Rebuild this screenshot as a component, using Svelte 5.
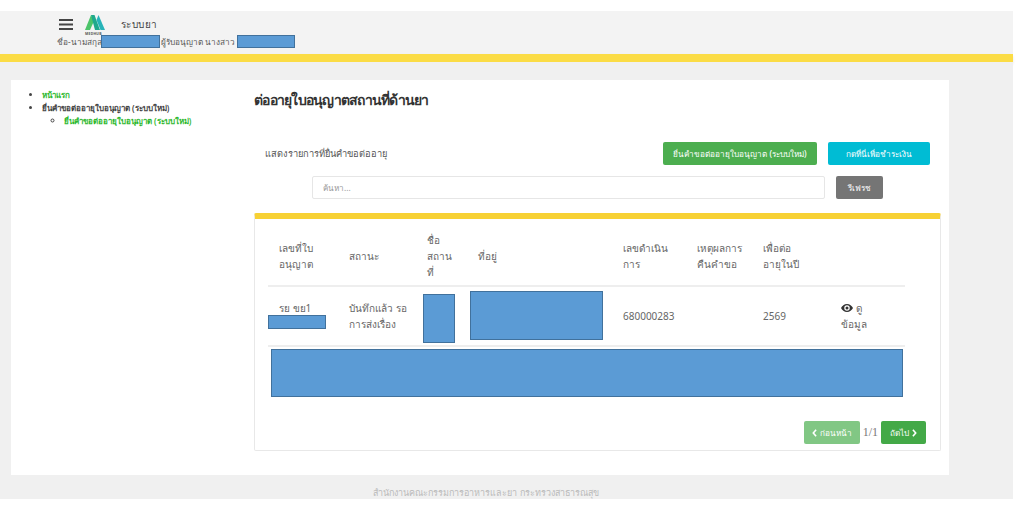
<script>
	const headers = [
		['เลขที่ใบ\nอนุญาต', 'c-license'],
		['สถานะ', 'c-status'],
		['ชื่อ\nสถาน\nที่', 'c-place'],
		['ที่อยู่', 'c-address'],
		['เลขดำเนิน\nการ', 'c-process'],
		['เหตุผลการ\nคืนคำขอ', 'c-reason'],
		['เพื่อต่อ\nอายุในปี', 'c-year'],
		['', 'c-action']
	];
</script>

<div class="page">
	<header class="topbar">
		<div class="brand">
			<svg class="burger" viewBox="0 0 14 11" aria-hidden="true">
				<rect width="14" height="2" y="0" />
				<rect width="14" height="2" y="4.5" />
				<rect width="14" height="2" y="9" />
			</svg>
			<svg class="logo" viewBox="0 0 20 21" aria-hidden="true">
				<path d="M0 15 L6 0 L9 6 L5 15Z" fill="#4cc46a" />
				<path d="M6 0 L9.500 0 L15 15 L10 15Z" fill="#1fa98c" />
				<path d="M11.500 5 L13.500 0 L20 15 L15.500 15Z" fill="#27b3b8" />
				<text x="0" y="20" class="logo-word">MEDHUB</text>
			</svg>
			<span class="system">ระบบยา</span>
		</div>
		<div class="userline">
			<span>ชื่อ-นามสกุล</span>
			<span class="redact name"></span>
			<span>ผู้รับอนุญาต นางสาว</span>
			<span class="redact person"></span>
		</div>
	</header>
	<div class="stripe"></div>

	<main class="main">
		<div class="panel">
			<nav class="side">
				<ul>
					<li><a href="#home" class="green">หน้าแรก</a></li>
					<li>
						ยื่นคำขอต่ออายุใบอนุญาต (ระบบใหม่)
						<ul>
							<li><a href="#new" class="green">ยื่นคำขอต่ออายุใบอนุญาต (ระบบใหม่)</a></li>
						</ul>
					</li>
				</ul>
			</nav>

			<section class="content">
				<h1>ต่ออายุใบอนุญาตสถานที่ด้านยา</h1>

				<div class="actions">
					<span class="subtitle">แสดงรายการที่ยื่นคำขอต่ออายุ</span>
					<button class="btn btn-green">ยื่นคำขอต่ออายุใบอนุญาต (ระบบใหม่)</button>
					<button class="btn btn-cyan">กดที่นี่เพื่อชำระเงิน</button>
				</div>

				<div class="search">
					<input type="text" placeholder="ค้นหา..." />
					<button class="btn btn-gray">รีเฟรช</button>
				</div>

				<div class="card">
					<table>
						<thead>
							<tr>
								{#each headers as [label, cls]}
									<th class={cls}>{label}</th>
								{/each}
							</tr>
						</thead>
						<tbody>
							<tr>
								<td class="license">รย ขย1<span class="redact license-box"></span></td>
								<td>{'บันทึกแล้ว รอ\nการส่งเรื่อง'}</td>
								<td class="boxed"><span class="redact place-box"></span></td>
								<td class="boxed"><span class="redact address-box"></span></td>
								<td>680000283</td>
								<td></td>
								<td>2569</td>
								<td>
									<svg class="eye" viewBox="0 0 24 16" aria-hidden="true">
										<path fill-rule="evenodd" d="M12 0C6.500 0 2.200 3.400 0 8c2.200 4.600 6.500 8 12 8s9.800-3.400 12-8c-2.200-4.600-6.500-8-12-8zm0 13.500a5.500 5.500 0 1 1 0-11 5.500 5.500 0 0 1 0 11zm0-2.500a3 3 0 1 0 0-6 3 3 0 0 0 0 6z" />
									</svg>
									{' ดู\nข้อมูล'}
								</td>
							</tr>
						</tbody>
					</table>
					<div class="redact wide-box"></div>
					<div class="pager">
						<button class="btn btn-page faded">
							<svg class="chev" viewBox="0 0 6 10" aria-hidden="true"><path d="M5 1 L1.500 5 L5 9" /></svg>
							ก่อนหน้า
						</button>
						<span class="count">1/1</span>
						<button class="btn btn-page">
							ถัดไป
							<svg class="chev" viewBox="0 0 6 10" aria-hidden="true"><path d="M1 1 L4.500 5 L1 9" /></svg>
						</button>
					</div>
				</div>
			</section>
		</div>
	</main>
	<footer class="foot">สำนักงานคณะกรรมการอาหารและยา กระทรวงสาธารณสุข</footer>
</div>

<style>
	:global(body) {
		margin: 0;
		background: #fff;
	}

	.page {
		width: 1013px;
		padding-top: 11px;
		font-family: 'Noto Sans', 'DejaVu Sans', sans-serif;
		font-size: 10px;
		line-height: 15px;
		color: #555;
	}

	.topbar {
		height: 43px;
		box-sizing: border-box;
		padding: 3px 0 0 57px;
		background: #f3f3f3;
	}

	.brand {
		display: flex;
		align-items: center;
		height: 20px;
		padding-left: 2px;
	}

	.burger {
		width: 14px;
		height: 11px;
		fill: #444;
		margin-right: 12px;
	}

	.logo {
		width: 20px;
		height: 21px;
		margin-right: 16px;
		overflow: visible;
		position: relative;
		top: 1px;
	}

	.logo-word {
		font-size: 3.500px;
		font-weight: 700;
		fill: #555;
		letter-spacing: 0.2px;
	}

	.system {
		font-size: 10px;
		letter-spacing: 0.4px;
		font-weight: 500;
		color: #444;
	}

	.userline {
		display: flex;
		align-items: center;
		gap: 1px;
		font-size: 8.200px;
		color: #555;
		height: 14px;
	}

	.redact {
		display: block;
		box-sizing: border-box;
		background: #5b9bd5;
		border: 1px solid #41719c;
	}

	.name {
		width: 59px;
		height: 13px;
		margin-left: -2px;
	}

	.person {
		width: 58px;
		height: 13px;
		margin-left: 1px;
	}

	.stripe {
		height: 8px;
		background: #fbdc45;
		box-shadow: 0 2px 3px rgba(0, 0, 0, 0.1);
	}

	.main {
		background: #f0f0f0;
		padding: 18px 64px 24px 11px;
	}

	.panel {
		display: flex;
		height: 395px;
		box-sizing: border-box;
		padding-right: 8px;
		background: #fff;
	}

	.side {
		width: 243px;
		flex: none;
		padding-top: 8px;
		font-size: 8px;
		line-height: 13px;
		font-weight: 600;
		color: #444;
	}

	.side ul {
		margin: 0;
		padding-left: 31px;
	}

	.side ul ul {
		padding-left: 22px;
	}

	.green {
		color: #2eb82e;
		text-decoration: none;
	}

	.content {
		flex: 1;
		min-width: 0;
	}

	h1 {
		margin: 8px 0 0;
		font-size: 14px;
		letter-spacing: -0.750px;
		line-height: 24px;
		font-weight: 600;
		color: #333;
	}

	.actions {
		display: flex;
		align-items: center;
		gap: 11px;
		margin: 30px 11px 0 11px;
	}

	.subtitle {
		flex: 1;
		font-size: 9.300px;
		color: #555;
	}

	.btn {
		border: 0;
		border-radius: 2px;
		color: #fff;
		font: inherit;
		font-weight: 500;
		font-size: 8.200px;
		padding: 0;
		cursor: pointer;
	}

	.btn-green {
		width: 154px;
		height: 23px;
		background: #4cae4f;
	}

	.btn-cyan {
		width: 102px;
		height: 23px;
		background: #00bcd4;
	}

	.search {
		display: flex;
		gap: 11px;
		margin: 11px 0 0 58px;
	}

	input {
		width: 513px;
		height: 23px;
		box-sizing: border-box;
		border: 1px solid #e6e6e6;
		border-radius: 2px;
		padding: 0 10px;
		font: inherit;
		font-size: 8.200px;
		outline: 0;
	}

	input::placeholder {
		color: #999;
	}

	.btn-gray {
		width: 47px;
		height: 23px;
		background: #757575;
	}

	.card {
		height: 238px;
		box-sizing: border-box;
		margin-top: 14px;
		padding: 7px 14px 0 16px;
		border: 1px solid #e8e8e8;
		border-top: 6px solid #f7d134;
		border-radius: 2px;
		display: flex;
		flex-direction: column;
	}

	table {
		width: 637px;
		margin-left: -3px;
		border-collapse: collapse;
		table-layout: fixed;
		font-size: 10px;
		line-height: 16px;
	}

	th {
		height: 60px;
		padding: 0 0 0 8px;
		text-align: left;
		font-weight: 400;
		color: #666;
		white-space: pre-line;
		border-bottom: 2px solid #eee;
		box-sizing: border-box;
	}

	td {
		height: 60px;
		padding: 0 0 0 8px;
		color: #666;
		white-space: pre-line;
		border-bottom: 2px solid #eee;
		box-sizing: border-box;
	}

	th:first-child,
	td:first-child {
		padding-left: 11px;
	}

	.c-license { width: 73px; }
	.c-status { width: 78px; }
	.c-place { width: 51px; }
	.c-address { width: 145px; }
	.c-process { width: 74px; }
	.c-reason { width: 66px; }
	.c-year { width: 78px; }
	.c-action { width: 72px; }

	td.license {
		padding-bottom: 4px;
	}

	.license-box {
		width: 58px;
		height: 14px;
		margin: -1px 0 0 -11px;
	}

	.boxed {
		padding: 0;
		position: relative;
	}

	.place-box {
		position: absolute;
		left: 4px;
		top: 7px;
		width: 32px;
		height: 49px;
	}

	.address-box {
		position: absolute;
		left: 0;
		top: 4px;
		width: 133px;
		height: 49px;
	}

	.eye {
		width: 12px;
		height: 8px;
		fill: #333;
	}

	.wide-box {
		flex: none;
		width: 632px;
		height: 48px;
		margin-top: 2px;
	}

	.pager {
		display: flex;
		justify-content: flex-end;
		align-items: center;
		gap: 3px;
		margin-top: 24px;
	}

	.btn-page {
		display: flex;
		align-items: center;
		justify-content: center;
		gap: 3px;
		height: 23px;
		background: #43a947;
	}

	.btn-page.faded {
		width: 56px;
		background: #81c784;
	}

	.btn-page:not(.faded) {
		width: 45px;
	}

	.chev {
		width: 5px;
		height: 8px;
		fill: none;
		stroke: #fff;
		stroke-width: 2;
	}

	.count {
		font-family: 'Liberation Serif', serif;
		font-size: 12px;
		color: #777;
	}

	.foot {
		height: 14px;
		margin-top: -14px;
		position: relative;
		text-align: center;
		width: 972px;
		font-size: 9px;
		color: #bbb;
	}
</style>
